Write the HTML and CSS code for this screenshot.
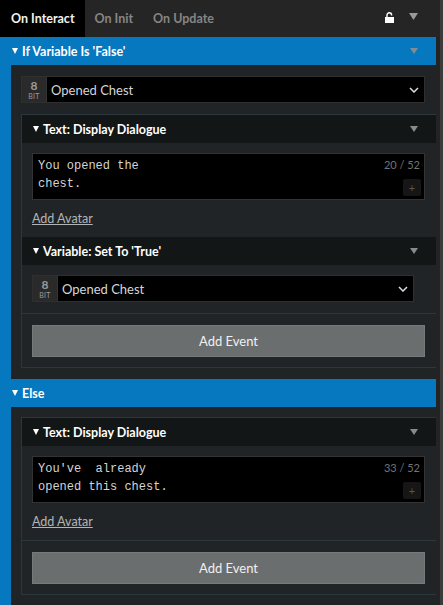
FILE: index.html
```html
<!DOCTYPE html>
<html>
<head>
  <link rel="stylesheet" href="styles.css">
</head>
<body>

  <div class="window">
    <div class="panel">

      <div class="tabs">
        <div class="tab active">On Interact</div>
        <div class="tab">On Init</div>
        <div class="tab">On Update</div>
        <div class="tab-tools">
          <svg class="lock" width="9" height="11" viewBox="0 0 9 11">
            <path d="M2 5.5 V3 A2.3 2.3 0 0 1 6.6 3 V3.6" fill="none" stroke="#fff" stroke-width="1.4"/>
            <rect x="0" y="5" width="9" height="6" fill="#fff"/>
          </svg>
          <svg class="tri" width="9" height="7" viewBox="0 0 9 7"><path d="M0 0 H9 L4.5 7 Z" fill="#9a9a9a"/></svg>
        </div>
      </div>

      <!-- IF branch -->
      <section class="branch">
        <div class="branch-head">
          <svg class="caret" width="6" height="6" viewBox="0 0 6 6"><path d="M0 0 H6 L3 6 Z" fill="#fff"/></svg>
          <span class="head-title">If Variable Is 'False'</span>
          <svg class="menu-tri" width="8" height="6" viewBox="0 0 8 6"><path d="M0 0 H8 L4 6 Z" fill="#7f8c96"/></svg>
        </div>
        <div class="branch-body">
          <div class="var-select top">
            <div class="bit"><b>8</b><small>BIT</small></div>
            <div class="var-name">Opened Chest</div>
            <svg class="chev" width="10" height="6" viewBox="0 0 10 6"><path d="M1 1 L5 5 L9 1" fill="none" stroke="#ddd" stroke-width="1.5"/></svg>
          </div>

          <div class="event-list">
            <div class="event">
              <div class="event-head">
                <svg class="caret" width="6" height="6" viewBox="0 0 6 6"><path d="M0 0 H6 L3 6 Z" fill="#fff"/></svg>
                <span class="head-title">Text: Display Dialogue</span>
                <svg class="menu-tri" width="8" height="6" viewBox="0 0 8 6"><path d="M0 0 H8 L4 6 Z" fill="#8a8a8a"/></svg>
              </div>
              <div class="event-body">
                <div class="dialogue">
                  <div class="dialogue-text">You opened the
chest.</div>
                  <span class="counter">20 / 52</span>
                  <span class="plus">+</span>
                </div>
                <a class="add-avatar" href="#">Add Avatar</a>
              </div>
            </div>

            <div class="event">
              <div class="event-head">
                <svg class="caret" width="6" height="6" viewBox="0 0 6 6"><path d="M0 0 H6 L3 6 Z" fill="#fff"/></svg>
                <span class="head-title">Variable: Set To 'True'</span>
                <svg class="menu-tri" width="8" height="6" viewBox="0 0 8 6"><path d="M0 0 H8 L4 6 Z" fill="#8a8a8a"/></svg>
              </div>
              <div class="event-body padded">
                <div class="var-select">
                  <div class="bit"><b>8</b><small>BIT</small></div>
                  <div class="var-name">Opened Chest</div>
                  <svg class="chev" width="10" height="6" viewBox="0 0 10 6"><path d="M1 1 L5 5 L9 1" fill="none" stroke="#ddd" stroke-width="1.5"/></svg>
                </div>
              </div>
            </div>

            <div class="event-footer">
              <button class="add-event">Add Event</button>
            </div>
          </div>
        </div>
      </section>

      <!-- ELSE branch -->
      <section class="branch">
        <div class="branch-head">
          <svg class="caret" width="6" height="6" viewBox="0 0 6 6"><path d="M0 0 H6 L3 6 Z" fill="#fff"/></svg>
          <span class="head-title">Else</span>
        </div>
        <div class="branch-body">
          <div class="event-list">
            <div class="event">
              <div class="event-head">
                <svg class="caret" width="6" height="6" viewBox="0 0 6 6"><path d="M0 0 H6 L3 6 Z" fill="#fff"/></svg>
                <span class="head-title">Text: Display Dialogue</span>
                <svg class="menu-tri" width="8" height="6" viewBox="0 0 8 6"><path d="M0 0 H8 L4 6 Z" fill="#8a8a8a"/></svg>
              </div>
              <div class="event-body">
                <div class="dialogue">
                  <div class="dialogue-text">You've  already
opened this chest.</div>
                  <span class="counter">33 / 52</span>
                  <span class="plus">+</span>
                </div>
                <a class="add-avatar" href="#">Add Avatar</a>
              </div>
            </div>

            <div class="event-footer">
              <button class="add-event">Add Event</button>
            </div>
          </div>
        </div>
      </section>

    </div>
    <div class="scrollbar"></div>
  </div>

</body>
</html>
```

FILE: styles.css
```css
body {
  margin: 0;
  background: #232323;
  font-family: 'Lato', 'Liberation Sans', sans-serif;
  color: #fff;
  overflow: hidden;
}

.window {
  display: flex;
  height: 605px;
}

.panel {
  width: 440px;
  background: #232323;
}

.scrollbar {
  width: 3px;
  background: #3b3b3b;
}

/* tabs */
.tabs {
  display: flex;
  height: 37px;
  background: #252525;
  align-items: stretch;
}
.tab {
  display: flex;
  align-items: center;
  padding: 0 10px;
  font-size: 12.5px;
  font-weight: bold;
  color: #858585;
}
.tab.active {
  background: #000;
  color: #f2f2f2;
  padding: 0 10px 0 11px;
}
.tab-tools {
  margin-left: auto;
  display: flex;
  align-items: center;
  gap: 15px;
  padding-right: 22px;
}
.tab-tools .lock {
  margin-top: -2px;
}
.tab-tools .tri {
  margin-top: -4px;
}

/* branch (if / else) */
.branch {
  width: 436px;
}
.branch-head {
  display: flex;
  align-items: center;
  height: 28px;
  background: #0678bf;
  padding: 0 18px 0 12px;
  font-size: 12.5px;
  font-weight: bold;
}
.head-title {
  margin-left: 4px;
}
.menu-tri {
  margin-left: auto;
}
.branch-body {
  border-left: 11px solid #0678bf;
  background: #212427;
  padding: 10px 0 11px 10px;
}
.branch + .branch .branch-body {
  padding-bottom: 10px;
}

/* variable select */
.var-select {
  display: flex;
  align-items: center;
  height: 27px;
  margin-right: 11px;
  background: #000;
  border: 1px solid #2f2f2f;
  box-sizing: border-box;
}
.var-select.top {
  margin-top: 1px;
}
.bit {
  width: 24px;
  height: 100%;
  background: #2a2a2a;
  border-right: 1px solid #333;
  display: flex;
  flex-direction: column;
  align-items: center;
  justify-content: center;
  color: #9a9a9a;
}
.bit b {
  font-size: 12px;
  line-height: 12px;
}
.bit small {
  font-size: 7px;
  line-height: 8px;
  letter-spacing: 0.3px;
}
.var-name {
  flex: 1;
  padding-left: 4px;
  font-size: 13px;
  color: #d6d6d6;
}
.chev {
  margin-right: 5px;
}

/* events */
.event-list {
  margin-top: 11px;
  border: 1px solid #2b383b;
  border-right: none;
}
.event-list:first-child {
  margin-top: 0;
}
.event-head {
  display: flex;
  align-items: center;
  height: 28px;
  background: #121617;
  padding: 0 18px 0 11px;
  font-size: 12.5px;
  font-weight: bold;
}
.event-body {
  padding: 10px 11px 0 10px;
}
.event-body.padded {
  padding-bottom: 11px;
}

.dialogue {
  position: relative;
  height: 47px;
  box-sizing: border-box;
  background: #000;
  border: 1px solid #333;
  padding: 3px 5px;
}
.dialogue-text {
  white-space: pre;
  font-family: 'Liberation Mono', monospace;
  font-size: 12px;
  line-height: 18px;
  color: #d4d4d4;
}
.counter {
  position: absolute;
  top: 4px;
  right: 4px;
  font-size: 11px;
  color: #737373;
}
.plus {
  position: absolute;
  right: 3px;
  bottom: 3px;
  width: 18px;
  height: 17px;
  border-radius: 2px;
  background: #161616;
  color: #555;
  font-size: 11px;
  line-height: 17px;
  text-align: center;
}

.add-avatar {
  display: block;
  line-height: 37px;
  font-size: 12.5px;
  color: #b4b4b4;
  text-decoration: underline;
  width: max-content;
}

.event-footer {
  border-top: 1px solid #2b383b;
  padding: 11px 11px 10px 10px;
}
.add-event {
  display: block;
  width: 100%;
  height: 32px;
  background: #6b6e6e;
  border: 1px solid #777a7a;
  color: #f0f0f0;
  font-family: 'Lato', 'Liberation Sans', sans-serif;
  font-size: 13px;
}
```
